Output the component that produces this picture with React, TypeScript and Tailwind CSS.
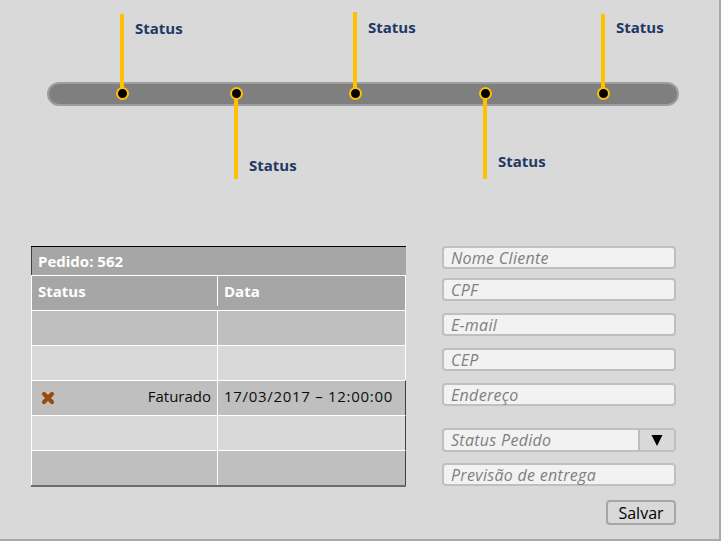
const markers = [
  { x: 122, up: true, top: 14, labelY: 19 },
  { x: 236, up: false, top: 93, labelY: 156 },
  { x: 355, up: true, top: 12, labelY: 18 },
  { x: 485, up: false, top: 93, labelY: 152 },
  { x: 603, up: true, top: 14, labelY: 18 },
];

const fields = [
  { label: "Nome Cliente", mt: "mt-0" },
  { label: "CPF", mt: "mt-[9px]" },
  { label: "E-mail", mt: "mt-[12px]" },
  { label: "CEP", mt: "mt-[12px]" },
  { label: "Endereço", mt: "mt-[12px]" },
];

const rows = [
  { bg: "bg-[#bfbfbf]", right: "border-r-white" },
  { bg: "bg-[#d9d9d9]", right: "border-r-white" },
  { bg: "bg-[#bfbfbf]", right: "border-r-[#404040]", status: "Faturado", date: "17/03/2017 – 12:00:00" },
  { bg: "bg-[#d9d9d9]", right: "border-r-[#404040]" },
  { bg: "bg-[#bfbfbf]", right: "border-r-[#404040]" },
];

function Cross() {
  return (
    <svg width="14" height="14" viewBox="0 0 14 14">
      <path d="M3 3 L11 11 M11 3 L3 11" stroke="#9c4a0c" strokeWidth="4.2" strokeLinecap="round" />
    </svg>
  );
}

function Timeline() {
  return (
    <div className="relative h-[246px]">
      <div className="absolute left-[47px] top-[82px] h-[24px] w-[632px] rounded-full border-2 border-[#9e9e9e] bg-[#7f7f7f]" />
      {markers.map((m, i) => (
        <div key={i}>
          <div
            className={`absolute w-[4px] bg-[#ffc000] ${m.up ? "h-[80px]" : "h-[86px]"}`}
            style={{ left: m.x - 2, top: m.up ? m.top : 93 }}
          />
          <div
            className="absolute h-[13px] w-[13px] rounded-full border-2 border-[#ffc000] bg-black"
            style={{ left: m.x - 6.5, top: 86.5 }}
          />
          <span
            className="absolute text-[15px] font-bold leading-[18px] text-[#1f3864]"
            style={{ left: m.x + 13, top: m.labelY }}
          >
            Status
          </span>
        </div>
      ))}
    </div>
  );
}

function OrderTable() {
  return (
    <div className="w-[375px] border-t border-black border-b-2 border-b-[#6b6b6b] text-[15px]">
      <div className="flex h-[28px] items-center border-l border-[#404040] bg-[#a6a6a6] px-[6px] font-bold text-white">
        Pedido: 562
      </div>
      <div className="flex h-[35px] border-t border-white border-l border-r border-r-white bg-[#a6a6a6] pb-[4px] font-bold text-white">
        <div className="flex w-[186px] items-center border-r border-white px-[6px]">Status</div>
        <div className="flex flex-1 items-center px-[6px]">Data</div>
      </div>
      {rows.map((r, i) => (
        <div key={i} className={`flex h-[35px] border-t border-l border-r border-white ${r.right} ${r.bg} text-[#0d0d0d]`}>
          <div className="flex w-[186px] items-center justify-between border-r border-white pl-[9px] pr-[6px]">
            {r.status && <Cross />}
            <span className="-mt-[3px]">{r.status}</span>
          </div>
          <div className="-mt-[3px] flex flex-1 items-center pl-[6px] tracking-[0.7px] whitespace-nowrap">{r.date}</div>
        </div>
      ))}
    </div>
  );
}

function Field({ label, className }: { label: string; className: string }) {
  return (
    <div className={`flex h-[23px] w-[234px] items-center rounded-[4px] border-2 border-[#bfbfbf] bg-[#f2f2f2] pl-[7px] text-[16px] italic tracking-[0.3px] text-[#7f7f7f] ${className}`}>
      {label}
    </div>
  );
}

function OrderForm() {
  return (
    <div className="flex w-[234px] flex-col">
      {fields.map((f) => (
        <Field key={f.label} label={f.label} className={f.mt} />
      ))}
      <div className="mt-[22px] flex h-[24px] w-[234px] overflow-hidden rounded-[4px] border-2 border-[#bfbfbf] bg-[#f2f2f2] text-[16px] italic tracking-[0.3px] text-[#7f7f7f]">
        <div className="flex flex-1 items-center pl-[7px]">Status Pedido</div>
        <div className="flex w-[36px] items-center justify-center border-l-2 border-[#bfbfbf] bg-[#d9d9d9]">
          <svg width="12" height="12" viewBox="0 0 12 12">
            <polygon points="0.5,1 11.5,1 6,12" fill="#000" />
          </svg>
        </div>
      </div>
      <Field label="Previsão de entrega" className="mt-[11px]" />
      <button className="mt-[14px] ml-auto h-[25px] w-[70px] rounded-[4px] border-2 border-[#a6a6a6] bg-[#d9d9d9] text-[16px] leading-none text-black">
        Salvar
      </button>
    </div>
  );
}

export default function App() {
  return (
    <div
      className="h-[541px] w-[721px] overflow-hidden border-r-2 border-b-2 border-[#a9a9a9] bg-[#d9d9d9]"
      style={{ fontFamily: '"Open Sans", "Noto Sans", sans-serif' }}
    >
      <Timeline />
      <div className="flex items-start gap-[36px] pl-[31px]">
        <OrderTable />
        <OrderForm />
      </div>
    </div>
  );
}
